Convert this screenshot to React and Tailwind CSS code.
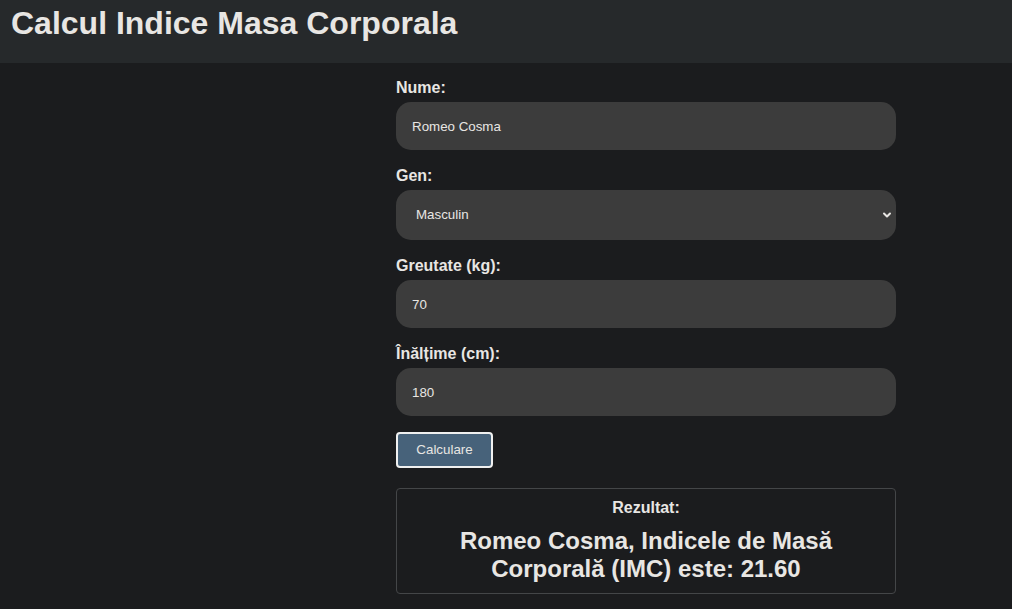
import { ChevronDown } from 'lucide-react';

export default function App() {
    const font = { fontFamily: '"Liberation Sans", Arial, sans-serif' };

    return (
        <div className="min-h-[609px] bg-[#1b1c1e] text-[#e8e6e3]" style={font}>
            {/* Header */}
            <header className="h-[63px] bg-[#26292b] px-[11px] pt-[5px]">
                <h1 className="text-[32px] font-bold leading-[37px]">Calcul Indice Masa Corporala</h1>
            </header>

            {/* Form */}
            <div className="ml-[396px] w-[500px] pt-[16px]">
                <label className="block text-[16px] font-bold leading-[18px] mb-[5px]">Nume:</label>
                <input
                    type="text"
                    defaultValue="Romeo Cosma"
                    className="block w-full h-[48px] rounded-[15px] bg-[#3c3c3c] px-[16px] text-[13.33px] text-[#e8e6e3] outline-none mb-[17px]"
                />

                <label className="block text-[16px] font-bold leading-[18px] mb-[5px]">Gen:</label>
                <div className="relative mb-[17px]">
                    <select
                        defaultValue="m"
                        className="block w-full h-[50px] rounded-[15px] bg-[#3c3c3c] pl-[20px] pr-8 text-[13.33px] text-[#e8e6e3] outline-none appearance-none"
                    >
                        <option value="m">Masculin</option>
                        <option value="f">Feminin</option>
                    </select>
                    <ChevronDown className="absolute right-[3px] top-1/2 -translate-y-1/2 w-[12px] h-[12px] pointer-events-none" strokeWidth={4} />
                </div>

                <label className="block text-[16px] font-bold leading-[18px] mb-[5px]">Greutate (kg):</label>
                <input
                    type="text"
                    defaultValue="70"
                    className="block w-full h-[48px] rounded-[15px] bg-[#3c3c3c] px-[16px] text-[13.33px] text-[#e8e6e3] outline-none mb-[17px]"
                />

                <label className="block text-[16px] font-bold leading-[18px] mb-[5px]">Înălțime (cm):</label>
                <input
                    type="text"
                    defaultValue="180"
                    className="block w-full h-[48px] rounded-[15px] bg-[#3c3c3c] px-[16px] text-[13.33px] text-[#e8e6e3] outline-none mb-[16px]"
                />

                <button className="block w-[97px] h-[36px] rounded-[4px] border-2 border-[#f0f0f0] bg-[#47627a] text-[13.33px] text-[#e8e6e3]">
                    Calculare
                </button>

                {/* Result */}
                <div className="mt-[20px] rounded-[4px] border border-[#444648] px-[20px] pt-[10px] pb-[10px] text-center">
                    <p className="text-[16px] font-bold leading-[18px]">Rezultat:</p>
                    <p className="mt-[10px] text-[24px] font-bold leading-[28px] px-[40px]">
                        Romeo Cosma, Indicele de Masă Corporală (IMC) este: 21.60
                    </p>
                </div>
            </div>
        </div>
    );
}
